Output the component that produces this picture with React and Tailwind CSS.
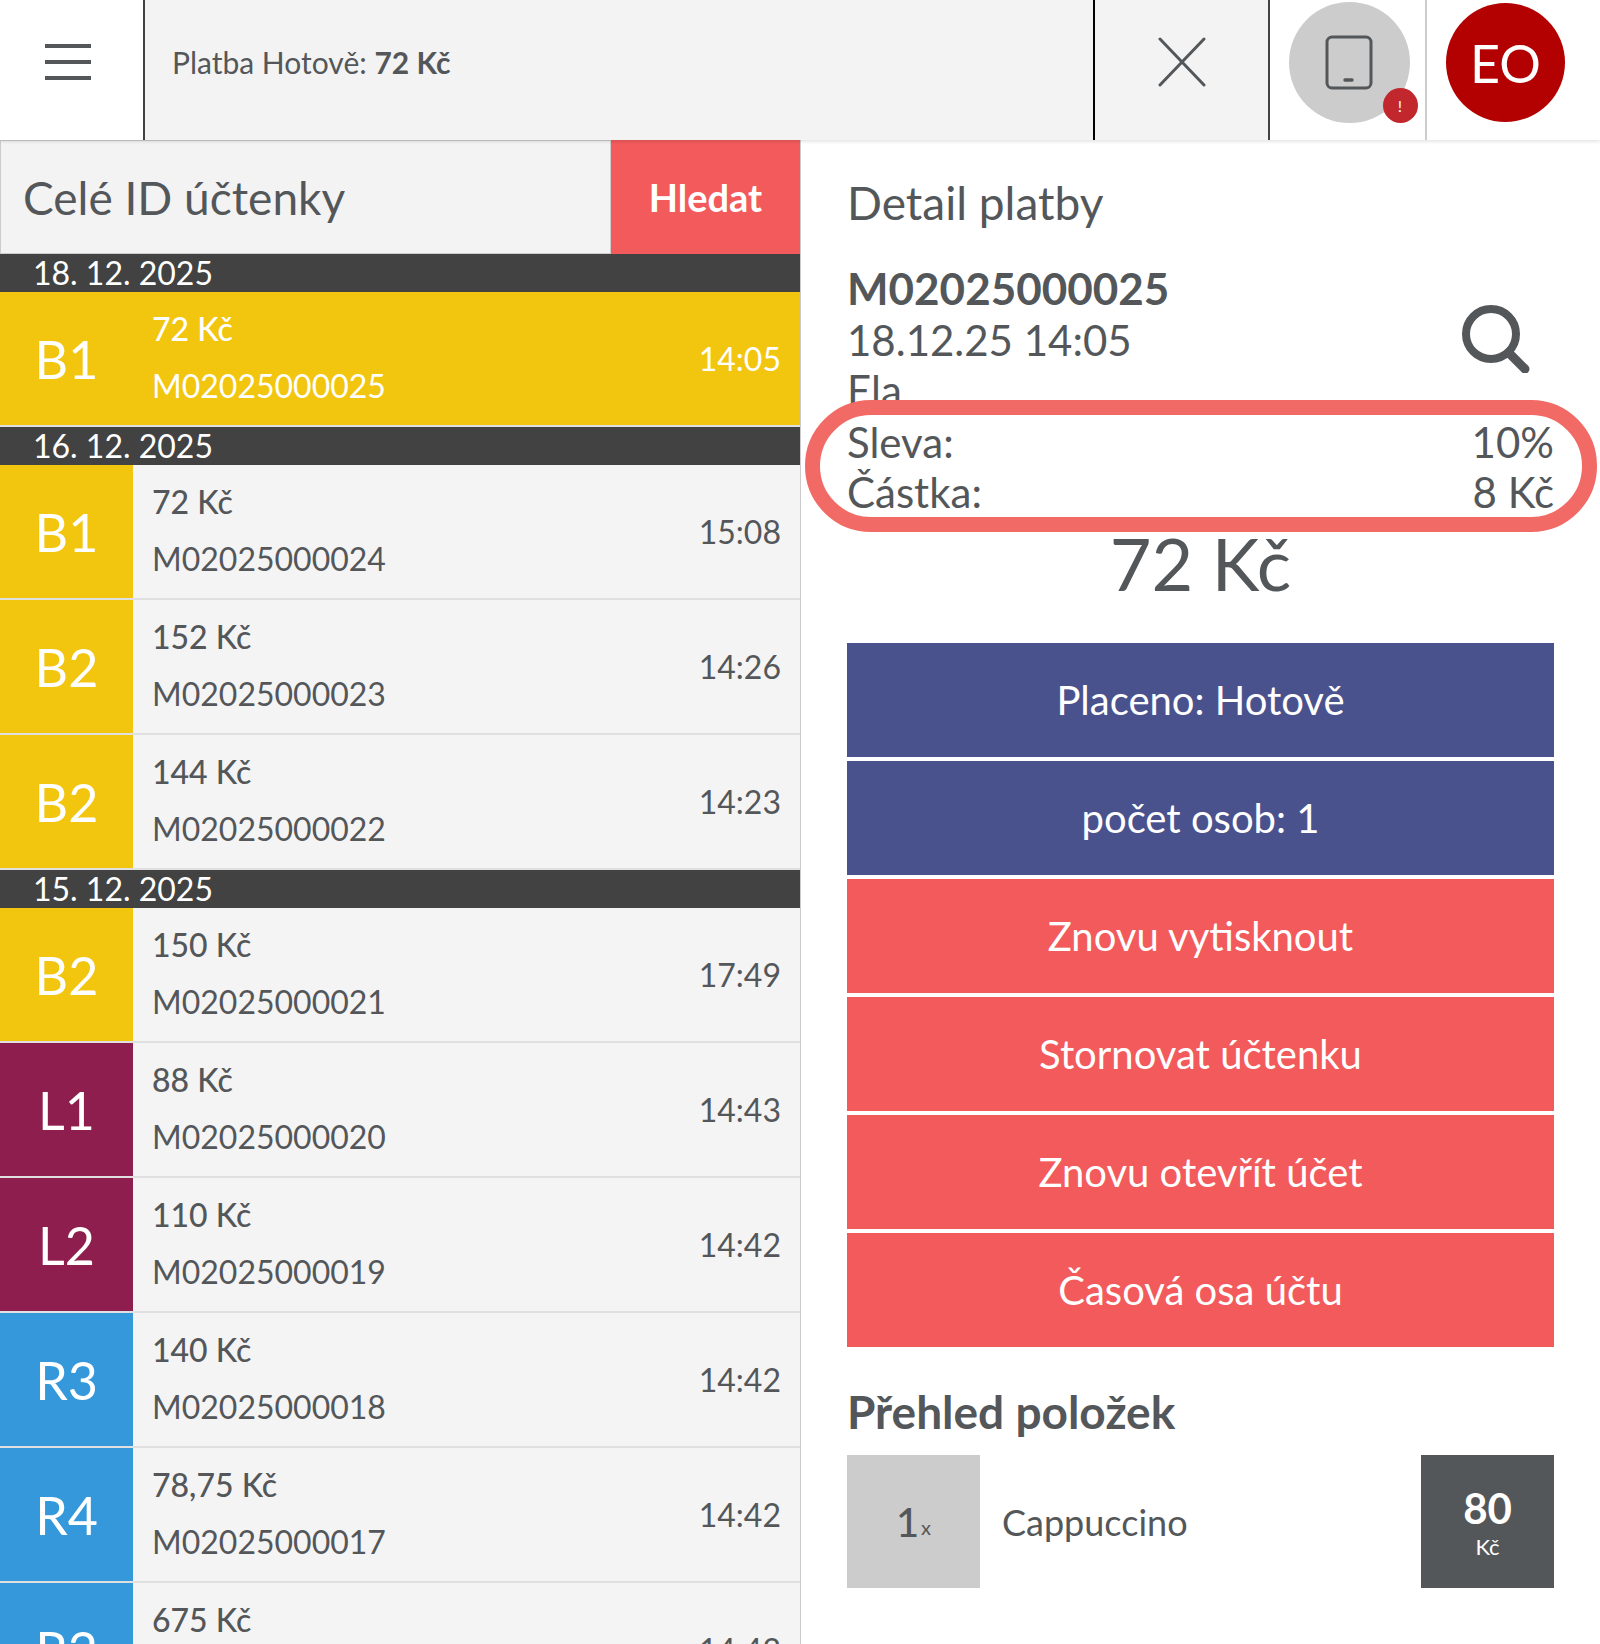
import { Menu, X } from 'lucide-react';

const GROUPS = [
  {
    date: '18. 12. 2025',
    rows: [{ code: 'B1', color: 'bg-[#f2c50f]', price: '72 Kč', id: 'M02025000025', time: '14:05', active: true }],
  },
  {
    date: '16. 12. 2025',
    rows: [
      { code: 'B1', color: 'bg-[#f2c50f]', price: '72 Kč', id: 'M02025000024', time: '15:08' },
      { code: 'B2', color: 'bg-[#f2c50f]', price: '152 Kč', id: 'M02025000023', time: '14:26' },
      { code: 'B2', color: 'bg-[#f2c50f]', price: '144 Kč', id: 'M02025000022', time: '14:23' },
    ],
  },
  {
    date: '15. 12. 2025',
    rows: [
      { code: 'B2', color: 'bg-[#f2c50f]', price: '150 Kč', id: 'M02025000021', time: '17:49' },
      { code: 'L1', color: 'bg-[#8e1e4d]', price: '88 Kč', id: 'M02025000020', time: '14:43' },
      { code: 'L2', color: 'bg-[#8e1e4d]', price: '110 Kč', id: 'M02025000019', time: '14:42' },
      { code: 'R3', color: 'bg-[#3498db]', price: '140 Kč', id: 'M02025000018', time: '14:42' },
      { code: 'R4', color: 'bg-[#3498db]', price: '78,75 Kč', id: 'M02025000017', time: '14:42' },
      { code: 'R2', color: 'bg-[#3498db]', price: '675 Kč', id: 'M02025000016', time: '14:42' },
    ],
  },
];

const BUTTONS = [
  { label: 'Placeno: Hotově', color: 'bg-[#4a528e]' },
  { label: 'počet osob: 1', color: 'bg-[#4a528e]' },
  { label: 'Znovu vytisknout', color: 'bg-[#f25a5c]' },
  { label: 'Stornovat účtenku', color: 'bg-[#f25a5c]' },
  { label: 'Znovu otevřít účet', color: 'bg-[#f25a5c]' },
  { label: 'Časová osa účtu', color: 'bg-[#f25a5c]' },
];

function Header() {
  return (
    <header className="flex h-[140px] shrink-0 bg-white shadow-[0_1px_4px_rgba(0,0,0,0.15)] relative z-10">
      <div className="w-[143px] flex items-center justify-center">
        <div className="w-[46px] flex flex-col gap-[12px] pr-0 -ml-[8px] -mt-[16px]">
          <span className="h-[4px] bg-[#54575a]" />
          <span className="h-[4px] bg-[#54575a]" />
          <span className="h-[4px] bg-[#54575a]" />
        </div>
      </div>
      <div className="w-[950px] bg-[#f3f3f3] border-l-2 border-[#424242] flex items-center pl-[27px] pb-[16px] text-[30px] text-[#54575a]">
        <span>Platba Hotově: <b className="font-bold">72 Kč</b></span>
      </div>
      <div className="w-[177px] bg-[#f3f3f3] border-x-2 border-l-black border-r-[#424242] flex items-center justify-center pb-[16px]">
        <svg width="48" height="50" viewBox="0 0 48 50" fill="none" stroke="#54575a" strokeWidth="3" strokeLinecap="round">
          <path d="M2 2 L46 48 M46 2 L2 48" />
        </svg>
      </div>
      <div className="w-[155px] flex justify-center pt-[2px] pl-[3px]">
        <div className="relative w-[121px] h-[121px] rounded-full bg-[#cccccc] flex items-center justify-center">
          <svg width="48" height="55" viewBox="0 0 48 55" fill="none" stroke="#54575a" strokeWidth="3" strokeLinecap="round">
            <rect x="2" y="2" width="44" height="51" rx="5" />
            <path d="M20 45 H27" strokeWidth="3.5" />
          </svg>
          <span className="absolute right-[-8px] bottom-0 w-[35px] h-[35px] rounded-full bg-[#c1272d] text-white text-[16px] flex items-center justify-center">!</span>
        </div>
      </div>
      <div className="flex-1 border-l-2 border-[#cccccc] flex justify-center pt-[3px] pr-[16px]">
        <div className="w-[119px] h-[119px] rounded-full bg-[#b30000] text-white text-[52px] flex items-center justify-center">EO</div>
      </div>
    </header>
  );
}

function ReceiptRow({ row }) {
  return (
    <div className={`flex h-[133px] shrink-0 ${row.active ? 'bg-[#f2c50f] text-white' : 'bg-[#f4f4f4] text-[#54575a]'}`}>
      <div className={`w-[133px] flex items-center justify-center text-white text-[52px] ${row.color}`}>{row.code}</div>
      <div className="flex-1 pl-[19px] pt-[17px] flex flex-col gap-[17px] text-[32px] leading-[40px]">
        <span className="font-medium">{row.price}</span>
        <span>{row.id}</span>
      </div>
      <div className="flex items-center pr-[19px] text-[32px]">{row.time}</div>
    </div>
  );
}

export default function App() {
  return (
    <div className="h-[1644px] w-[1600px] overflow-hidden flex flex-col bg-white font-['Lato',sans-serif] text-[#54575a]">
      <Header />
      <div className="flex flex-1 min-h-0">
        <aside className="w-[801px] border-r border-[#cccccc] flex flex-col overflow-hidden bg-[#e0e0e0]">
          <div className="flex h-[114px] shrink-0">
            <input
              readOnly
              placeholder="Celé ID účtenky"
              className="flex-1 min-w-0 bg-[#f3f3f3] border border-[#cccccc] pl-[22px] text-[46px] placeholder:text-[#54575a] outline-none"
            />
            <button className="w-[189px] bg-[#f25a5c] text-white font-bold text-[38px]">Hledat</button>
          </div>
          {GROUPS.map((group) => (
            <div key={group.date} className="flex flex-col shrink-0">
              <div className="h-[38px] bg-[#424242] text-white text-[32px] leading-[38px] pl-[33px]">{group.date}</div>
              <div className="flex flex-col gap-[2px] pb-[2px]">
                {group.rows.map((row) => (
                  <ReceiptRow key={row.id} row={row} />
                ))}
              </div>
            </div>
          ))}
        </aside>

        <main className="flex-1 px-[46px] pt-[38px] min-w-0">
          <h2 className="text-[46px] leading-[50px] font-normal">Detail platby</h2>
          <div className="flex items-start justify-between mt-[35px] pr-[24px]">
            <div className="text-[42px] leading-[50px] h-[137px]">
              <div className="font-bold text-[44px]">M02025000025</div>
              <div className="-mt-[-2px]">18.12.25 14:05</div>
              <div>Ela</div>
            </div>
            <svg className="mt-[42px]" width="68" height="68" viewBox="0 0 68 68" fill="none" stroke="#54575a" strokeLinecap="round">
              <circle cx="29" cy="29" r="25" strokeWidth="8" />
              <path d="M47 48 L63 64" strokeWidth="9" />
            </svg>
          </div>
          <div className="relative -ml-[42px] -mr-[43px] h-[132px] border-[15px] border-[#f26a65] rounded-[66px] bg-white pl-[27px] pr-[28px] pt-[2px] text-[42px] leading-[50px]">
            <div className="flex justify-between"><span>Sleva:</span><span>10%</span></div>
            <div className="flex justify-between"><span>Částka:</span><span>8 Kč</span></div>
          </div>
          <div className="text-center text-[72px] leading-[62px]">72 Kč</div>
          <div className="mt-[49px] flex flex-col gap-[4px]">
            {BUTTONS.map((btn) => (
              <button key={btn.label} className={`h-[114px] text-white text-[40px] ${btn.color}`}>{btn.label}</button>
            ))}
          </div>
          <h2 className="mt-[40px] text-[46px] leading-[50px] font-bold">Přehled položek</h2>
          <div className="flex items-center mt-[18px] h-[133px]">
            <div className="w-[133px] h-full bg-[#cccccc] flex items-center justify-center text-[40px] font-medium">
              1<span className="text-[20px] font-normal mt-[10px] ml-[2px]">x</span>
            </div>
            <div className="flex-1 pl-[22px] text-[36px]">Cappuccino</div>
            <div className="w-[133px] h-full bg-[#54575a] text-white flex flex-col items-center justify-center">
              <span className="text-[42px] leading-[50px] font-bold">80</span>
              <span className="text-[22px] leading-[28px]">Kč</span>
            </div>
          </div>
        </main>
      </div>
    </div>
  );
}
